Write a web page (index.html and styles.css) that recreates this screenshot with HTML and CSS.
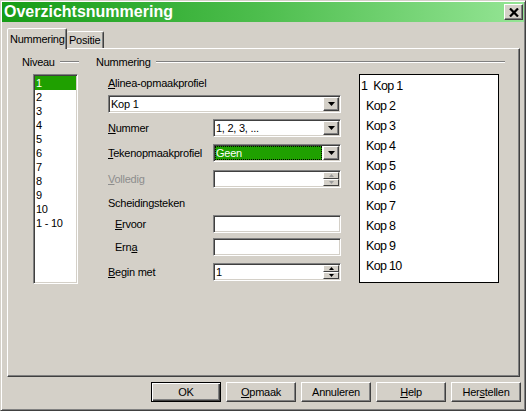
FILE: index.html
```html
<!DOCTYPE html>
<html>
<head>
<meta charset="utf-8">
<link rel="stylesheet" href="styles.css">
</head>
<body>
<div class="window">
  <div class="titlebar">
    <span class="title">Overzichtsnummering</span>
    <span class="close"><svg width="10" height="9" viewBox="0 0 10 9"><path d="M1 0.5 L9 8.5 M9 0.5 L1 8.5" stroke="#000" stroke-width="2.2"/></svg></span>
  </div>
  <div class="tabs">
    <div class="tab active">Nummering</div>
    <div class="tab">Positie</div>
  </div>
  <div class="panel">
    <div class="group niveau">
      <div class="ghead"><span>Niveau</span><span class="rule"></span></div>
      <div class="listbox">
        <div class="li sel">1</div>
        <div class="li">2</div>
        <div class="li">3</div>
        <div class="li">4</div>
        <div class="li">5</div>
        <div class="li">6</div>
        <div class="li">7</div>
        <div class="li">8</div>
        <div class="li">9</div>
        <div class="li">10</div>
        <div class="li">1 - 10</div>
      </div>
    </div>
    <div class="group nummering">
      <div class="ghead"><span>Nummering</span><span class="rule"></span></div>
      <div class="gbody">
        <div class="form">
          <div class="lbl first"><span class="ak">A</span>linea-opmaakprofiel</div>
          <div class="select wide"><span class="val">Kop 1</span><span class="dbtn"><svg width="7" height="4" viewBox="0 0 7 4"><path d="M0 0 H7 L3.5 4 Z" fill="#000"/></svg></span></div>
          <div class="row r-num">
            <span class="rl"><span class="ak">N</span>ummer</span>
            <div class="select"><span class="val">1, 2, 3, ...</span><span class="dbtn"><svg width="7" height="4" viewBox="0 0 7 4"><path d="M0 0 H7 L3.5 4 Z" fill="#000"/></svg></span></div>
          </div>
          <div class="row r-tek">
            <span class="rl"><span class="ak">T</span>ekenopmaakprofiel</span>
            <div class="select"><span class="val focus">Geen</span><span class="dbtn"><svg width="7" height="4" viewBox="0 0 7 4"><path d="M0 0 H7 L3.5 4 Z" fill="#000"/></svg></span></div>
          </div>
          <div class="row r-vol">
            <span class="rl disabled"><span class="ak">V</span>olledig</span>
            <div class="select"><span class="val"></span><span class="spin dis"><span class="sb"><svg width="5" height="3" viewBox="0 0 5 3"><path d="M0 3 H5 L2.5 0 Z" fill="#9a9a9a"/></svg></span><span class="sb"><svg width="5" height="3" viewBox="0 0 5 3"><path d="M0 0 H5 L2.5 3 Z" fill="#9a9a9a"/></svg></span></span></div>
          </div>
          <div class="lbl scheid">Scheidingsteken</div>
          <div class="row r-erv">
            <span class="rl ind"><span class="ak">E</span>rvoor</span>
            <div class="select"><span class="val"></span></div>
          </div>
          <div class="row r-ern">
            <span class="rl ind">Ern<span class="ak">a</span></span>
            <div class="select"><span class="val"></span></div>
          </div>
          <div class="row r-beg">
            <span class="rl"><span class="ak">B</span>egin met</span>
            <div class="select"><span class="val">1</span><span class="spin"><span class="sb"><svg width="5" height="3" viewBox="0 0 5 3"><path d="M0 3 H5 L2.5 0 Z" fill="#000"/></svg></span><span class="sb"><svg width="5" height="3" viewBox="0 0 5 3"><path d="M0 0 H5 L2.5 3 Z" fill="#000"/></svg></span></span></div>
          </div>
        </div>
        <div class="preview">
          <div class="pi first"><span class="num">1</span>Kop 1</div>
          <div class="pi">Kop 2</div>
          <div class="pi">Kop 3</div>
          <div class="pi">Kop 4</div>
          <div class="pi">Kop 5</div>
          <div class="pi">Kop 6</div>
          <div class="pi">Kop 7</div>
          <div class="pi">Kop 8</div>
          <div class="pi">Kop 9</div>
          <div class="pi">Kop 10</div>
        </div>
      </div>
    </div>
  </div>
  <div class="buttons">
    <div class="btn default">OK</div>
    <div class="btn"><span class="ak">O</span>pmaak</div>
    <div class="btn">Annuleren</div>
    <div class="btn"><span class="ak">H</span>elp</div>
    <div class="btn">Her<span class="ak">s</span>tellen</div>
  </div>
</div>
</body>
</html>
```

FILE: styles.css
```css
* { box-sizing: border-box; }
html, body { margin: 0; padding: 0; }
body {
  width: 526px;
  height: 411px;
  background: #d4d0c8;
  font-family: "Liberation Sans", Arial, sans-serif;
  font-size: 11px;
  letter-spacing: -0.25px;
  color: #000;
  overflow: hidden;
}
.window {
  width: 526px;
  height: 411px;
  padding: 1px;
  border: 1px solid;
  border-color: #d4d0c8 #404040 #404040 #d4d0c8;
  box-shadow: inset 1px 1px #fff, inset -1px -1px #808080;
  background: #d4d0c8;
}
.titlebar {
  height: 20px;
  display: flex;
  align-items: center;
  justify-content: space-between;
  background: linear-gradient(to right, #169c16 0%, #4ebe4e 50%, #95e595 100%);
  padding: 0 1px 0 2px;
}
.title {
  color: #fff;
  font-weight: bold;
  font-size: 16px;
  letter-spacing: 0;
  line-height: 20px;
}
.close {
  width: 19px;
  height: 16px;
  background: #d4d0c8;
  border: 1px solid;
  border-color: #fff #404040 #404040 #fff;
  box-shadow: inset -1px -1px #808080;
  display: flex;
  align-items: center;
  justify-content: center;
}
.tabs {
  display: flex;
  align-items: flex-end;
  margin-top: 6px;
  padding-left: 5px;
  height: 20px;
}
.tab {
  height: 17px;
  border: 1px solid;
  border-bottom: none;
  border-color: #fff #404040 transparent #fff;
  box-shadow: inset -1px 0 #808080;
  border-radius: 2px 2px 0 0;
  padding: 2px 0 0 2px;
  background: #d4d0c8;
  line-height: 13px;
}
.tab.active {
  width: 60px;
  height: 21px;
  margin-bottom: -1px;
  position: relative;
  z-index: 1;
  padding-top: 4px;
}
.tab:not(.active) { width: 37px; border-left: none; }
.panel {
  width: 513px;
  height: 329px;
  margin-left: 5px;
  border: 1px solid;
  border-color: #fff #404040 #404040 #fff;
  box-shadow: inset -1px -1px #808080;
  display: flex;
  padding: 6px 0 0 14px;
}
.group { display: flex; flex-direction: column; }
.niveau { width: 57px; }
.nummering { width: 409px; margin-left: 17px; }
.ghead {
  display: flex;
  align-items: center;
  height: 14px;
  line-height: 14px;
}
.rule {
  flex: 1;
  height: 2px;
  border-top: 1px solid #808080;
  border-bottom: 1px solid #fff;
  margin-left: 5px;
}
.listbox {
  margin: 5px 0 0 11px;
  width: 45px;
  height: 210px;
  background: #fff;
  border: 1px solid;
  border-color: #808080 #fff #fff #808080;
  box-shadow: inset 1px 1px #404040, inset -1px -1px #d4d0c8;
  padding: 1px 1px;
}
.li {
  height: 14px;
  line-height: 14px;
  padding-left: 1px;
}
.li.sel { background: #1fa000; color: #fff; }
.gbody { display: flex; }
.form {
  width: 233px;
  margin-left: 12px;
  display: flex;
  flex-direction: column;
}
.lbl { height: 14px; line-height: 14px; }
.lbl.first { margin-top: 7px; }
.lbl.scheid { margin-top: 8px; }
.ak { text-decoration: underline; }
.select {
  width: 128px;
  height: 18px;
  background: #fff;
  border: 1px solid;
  border-color: #808080 #fff #fff #808080;
  box-shadow: inset 1px 1px #404040, inset -1px -1px #d4d0c8;
  display: flex;
  padding: 1px;
}
.select.wide { width: 233px; margin-top: 5px; }
.val {
  flex: 1;
  line-height: 14px;
  padding-left: 1px;
}
.val.focus {
  background: #1fa000;
  color: #fff;
  outline: 1px dotted #000;
  outline-offset: -1px;
  margin-right: 1px;
}
.dbtn {
  width: 16px;
  height: 14px;
  background: #d4d0c8;
  border: 1px solid;
  border-color: #fff #404040 #404040 #fff;
  box-shadow: inset -1px -1px #808080;
  display: flex;
  align-items: center;
  justify-content: center;
}
.spin {
  width: 16px;
  height: 14px;
  display: flex;
  flex-direction: column;
}
.sb {
  flex: 1;
  background: #d4d0c8;
  border: 1px solid;
  border-color: #fff #404040 #404040 #fff;
  display: flex;
  align-items: center;
  justify-content: center;
}
.row {
  display: flex;
  align-items: center;
  height: 18px;
}
.rl { width: 105px; }
.rl.ind { padding-left: 7px; }
.rl.disabled { color: #8d8d8d; }
.r-num { margin-top: 6px; }
.r-tek { margin-top: 7px; }
.r-vol { margin-top: 8px; }
.r-erv { margin-top: 5px; }
.r-ern { margin-top: 5px; }
.r-beg { margin-top: 7px; }
.preview {
  width: 140px;
  height: 209px;
  margin: 5px 0 0 18px;
  background: #fff;
  border: 1px solid #000;
  padding-top: 1px;
  font-size: 12.5px;
  letter-spacing: -0.7px;
}
.pi {
  height: 20px;
  line-height: 20px;
  padding-left: 6px;
}
.pi.first { padding-left: 1px; }
.num { margin-right: 6px; }
.buttons {
  display: flex;
  justify-content: flex-end;
  gap: 5px;
  margin-top: 5px;
  padding-right: 3px;
}
.btn {
  width: 70px;
  height: 20px;
  border: 1px solid;
  border-color: #fff #404040 #404040 #fff;
  box-shadow: inset -1px -1px #808080;
  display: flex;
  align-items: center;
  justify-content: center;
}
.btn.default {
  border: 1px solid #000;
  box-shadow: inset 1px 1px #fff, inset -1px -1px #404040, inset -2px -2px #808080;
}
```
